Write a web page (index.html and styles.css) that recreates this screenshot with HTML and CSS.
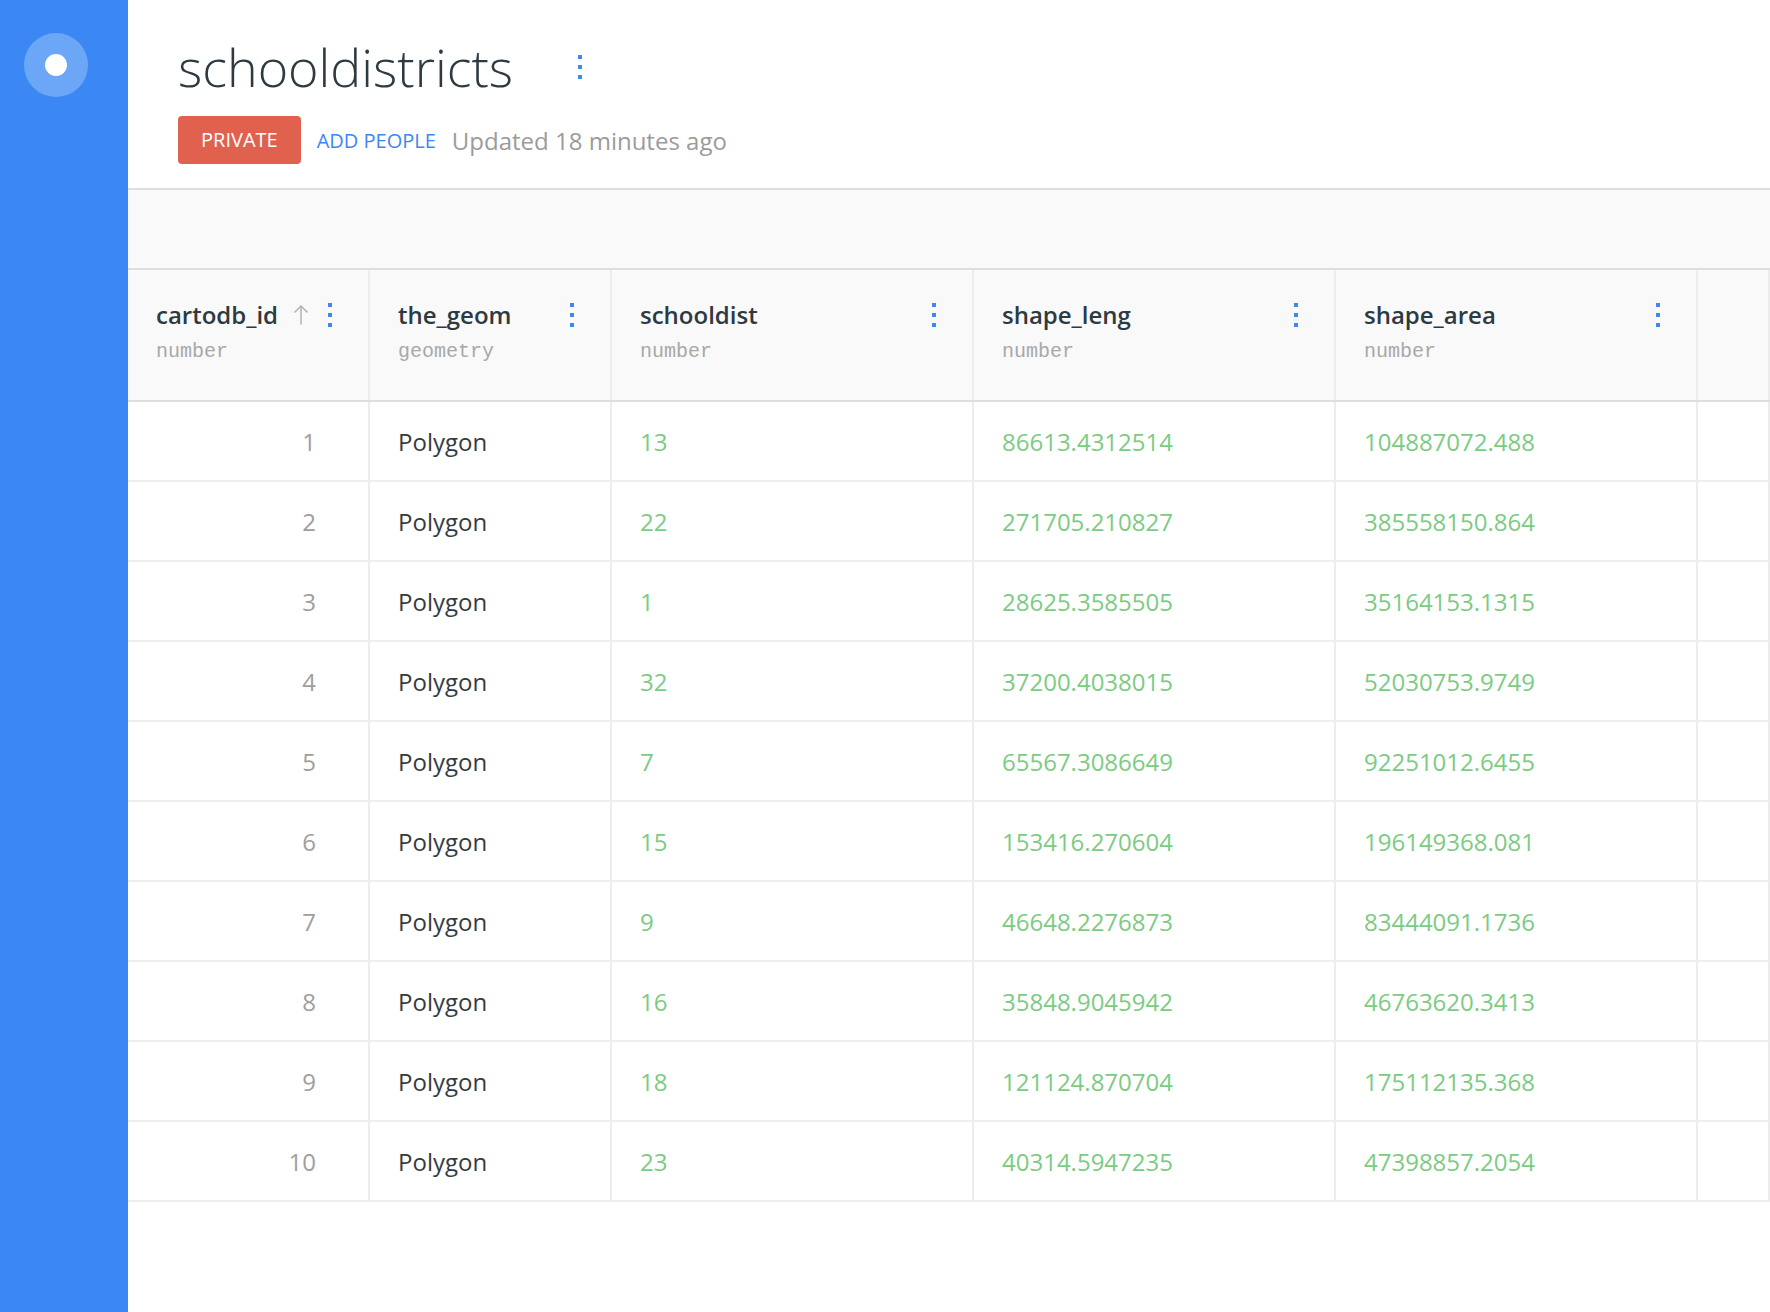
FILE: index.html
```html
<!DOCTYPE html>
<html lang="en">
<head>
<meta charset="utf-8">
<title>schooldistricts</title>
<link rel="stylesheet" href="styles.css">
</head>
<body>
<div class="app">
  <aside class="sidebar">
    <div class="avatar"><span class="avatar-dot"></span></div>
  </aside>
  <main class="main">
    <header class="head">
      <div class="title-row">
        <h1 class="title">schooldistricts</h1>
        <svg class="kebab title-kebab" width="4" height="24" viewBox="0 0 4 24"><rect x="0" y="0" width="4" height="4"/><rect x="0" y="10" width="4" height="4"/><rect x="0" y="20" width="4" height="4"/></svg>
      </div>
      <div class="meta">
        <span class="badge">PRIVATE</span>
        <span class="add">ADD PEOPLE</span>
        <span class="updated">Updated 18 minutes ago</span>
      </div>
    </header>
    <div class="toolbar"></div>
    <div class="table">
      <div class="row thead">
        <div class="cell w-s">
          <div class="name-row"><span class="col-name">cartodb_id</span>
            <svg class="arrow" width="16" height="20" viewBox="0 0 16 20"><path d="M8 19.5V1M1.5 7.5L8 1l6.5 6.5" fill="none" stroke="#b3b3b3" stroke-width="1.5"/></svg>
            <svg class="kebab" width="4" height="24" viewBox="0 0 4 24"><rect x="0" y="0" width="4" height="4"/><rect x="0" y="10" width="4" height="4"/><rect x="0" y="20" width="4" height="4"/></svg>
          </div>
          <div class="col-type">number</div>
        </div>
        <div class="cell w-s">
          <div class="name-row"><span class="col-name">the_geom</span>
            <svg class="kebab" width="4" height="24" viewBox="0 0 4 24"><rect x="0" y="0" width="4" height="4"/><rect x="0" y="10" width="4" height="4"/><rect x="0" y="20" width="4" height="4"/></svg>
          </div>
          <div class="col-type">geometry</div>
        </div>
        <div class="cell w-l">
          <div class="name-row"><span class="col-name">schooldist</span>
            <svg class="kebab" width="4" height="24" viewBox="0 0 4 24"><rect x="0" y="0" width="4" height="4"/><rect x="0" y="10" width="4" height="4"/><rect x="0" y="20" width="4" height="4"/></svg>
          </div>
          <div class="col-type">number</div>
        </div>
        <div class="cell w-l">
          <div class="name-row"><span class="col-name">shape_leng</span>
            <svg class="kebab" width="4" height="24" viewBox="0 0 4 24"><rect x="0" y="0" width="4" height="4"/><rect x="0" y="10" width="4" height="4"/><rect x="0" y="20" width="4" height="4"/></svg>
          </div>
          <div class="col-type">number</div>
        </div>
        <div class="cell w-l">
          <div class="name-row"><span class="col-name">shape_area</span>
            <svg class="kebab" width="4" height="24" viewBox="0 0 4 24"><rect x="0" y="0" width="4" height="4"/><rect x="0" y="10" width="4" height="4"/><rect x="0" y="20" width="4" height="4"/></svg>
          </div>
          <div class="col-type">number</div>
        </div>
        <div class="cell fill"></div>
      </div>

      <div class="row"><div class="cell w-s id">1</div><div class="cell w-s geom">Polygon</div><div class="cell w-l val">13</div><div class="cell w-l val">86613.4312514</div><div class="cell w-l val">104887072.488</div><div class="cell fill"></div></div>
      <div class="row"><div class="cell w-s id">2</div><div class="cell w-s geom">Polygon</div><div class="cell w-l val">22</div><div class="cell w-l val">271705.210827</div><div class="cell w-l val">385558150.864</div><div class="cell fill"></div></div>
      <div class="row"><div class="cell w-s id">3</div><div class="cell w-s geom">Polygon</div><div class="cell w-l val">1</div><div class="cell w-l val">28625.3585505</div><div class="cell w-l val">35164153.1315</div><div class="cell fill"></div></div>
      <div class="row"><div class="cell w-s id">4</div><div class="cell w-s geom">Polygon</div><div class="cell w-l val">32</div><div class="cell w-l val">37200.4038015</div><div class="cell w-l val">52030753.9749</div><div class="cell fill"></div></div>
      <div class="row"><div class="cell w-s id">5</div><div class="cell w-s geom">Polygon</div><div class="cell w-l val">7</div><div class="cell w-l val">65567.3086649</div><div class="cell w-l val">92251012.6455</div><div class="cell fill"></div></div>
      <div class="row"><div class="cell w-s id">6</div><div class="cell w-s geom">Polygon</div><div class="cell w-l val">15</div><div class="cell w-l val">153416.270604</div><div class="cell w-l val">196149368.081</div><div class="cell fill"></div></div>
      <div class="row"><div class="cell w-s id">7</div><div class="cell w-s geom">Polygon</div><div class="cell w-l val">9</div><div class="cell w-l val">46648.2276873</div><div class="cell w-l val">83444091.1736</div><div class="cell fill"></div></div>
      <div class="row"><div class="cell w-s id">8</div><div class="cell w-s geom">Polygon</div><div class="cell w-l val">16</div><div class="cell w-l val">35848.9045942</div><div class="cell w-l val">46763620.3413</div><div class="cell fill"></div></div>
      <div class="row"><div class="cell w-s id">9</div><div class="cell w-s geom">Polygon</div><div class="cell w-l val">18</div><div class="cell w-l val">121124.870704</div><div class="cell w-l val">175112135.368</div><div class="cell fill"></div></div>
      <div class="row"><div class="cell w-s id">10</div><div class="cell w-s geom">Polygon</div><div class="cell w-l val">23</div><div class="cell w-l val">40314.5947235</div><div class="cell w-l val">47398857.2054</div><div class="cell fill"></div></div>
    </div>
  </main>
</div>
</body>
</html>
```

FILE: styles.css
```css
html, body {
  margin: 0;
  padding: 0;
  background: #ffffff;
}

body {
  font-family: "Open Sans", "Noto Sans", sans-serif;
  color: #2e3a42;
}

.app {
  display: flex;
  min-height: 1312px;
}

.sidebar {
  flex: none;
  width: 128px;
  box-sizing: border-box;
  padding: 33px 0 0 24px;
  background: #3b88f4;
}

.avatar {
  width: 64px;
  height: 64px;
  border-radius: 50%;
  background: rgba(255, 255, 255, 0.25);
  display: flex;
  align-items: center;
  justify-content: center;
}

.avatar-dot {
  width: 22px;
  height: 22px;
  border-radius: 50%;
  background: #ffffff;
}

.main {
  flex: 1;
  min-width: 0;
  overflow: hidden;
}

.head {
  padding: 37px 0 24px 50px;
  border-bottom: 2px solid #dedede;
}

.title-row {
  display: flex;
  align-items: center;
}

.title {
  margin: 0;
  font-size: 52px;
  line-height: 60px;
  font-weight: 300;
  color: #2e3a42;
}

.kebab {
  flex: none;
  display: block;
  fill: #3b88f4;
}

.title-kebab {
  margin-left: 65px;
}

.meta {
  margin-top: 19px;
  display: flex;
  align-items: center;
  gap: 16px;
}

.badge {
  height: 48px;
  padding: 0 23px;
  border-radius: 4px;
  background: #e0614d;
  color: #ffffff;
  font-size: 20px;
  line-height: 48px;
}

.add {
  color: #3b88f4;
  font-size: 20px;
}

.updated {
  color: #9b9b9b;
  font-size: 24px;
}

.toolbar {
  height: 78px;
  background: #f9f9f9;
  border-bottom: 2px solid #dedede;
}

.row {
  display: flex;
  border-bottom: 2px solid #eeeeee;
}

.cell {
  flex: none;
  box-sizing: border-box;
  height: 78px;
  border-right: 2px solid #ececec;
  padding-left: 28px;
  font-size: 24px;
  line-height: 76px;
  padding-top: 2px;
  white-space: nowrap;
}

.w-s { width: 242px; }
.w-l { width: 362px; }
.fill { flex: 1; }

.id {
  text-align: right;
  padding-right: 52px;
  color: #9e9e9e;
}

.geom { color: #333c42; }

.val { color: #7ccb83; }

.thead {
  background: #f9f9f9;
  border-bottom-color: #dedede;
}

.thead .cell {
  height: 130px;
  padding: 30px 36px 0 28px;
  line-height: normal;
}

.name-row {
  display: flex;
  align-items: center;
  height: 30px;
}

.col-name {
  flex: 1;
  font-weight: 600;
  font-size: 24px;
  line-height: 30px;
  color: #2e3a42;
}

.arrow {
  flex: none;
  display: block;
  margin-right: 19px;
}

.col-type {
  margin-top: 9px;
  font-family: "Liberation Mono", "DejaVu Sans Mono", monospace;
  font-size: 20px;
  line-height: 26px;
  color: #a8a8a8;
}
```
